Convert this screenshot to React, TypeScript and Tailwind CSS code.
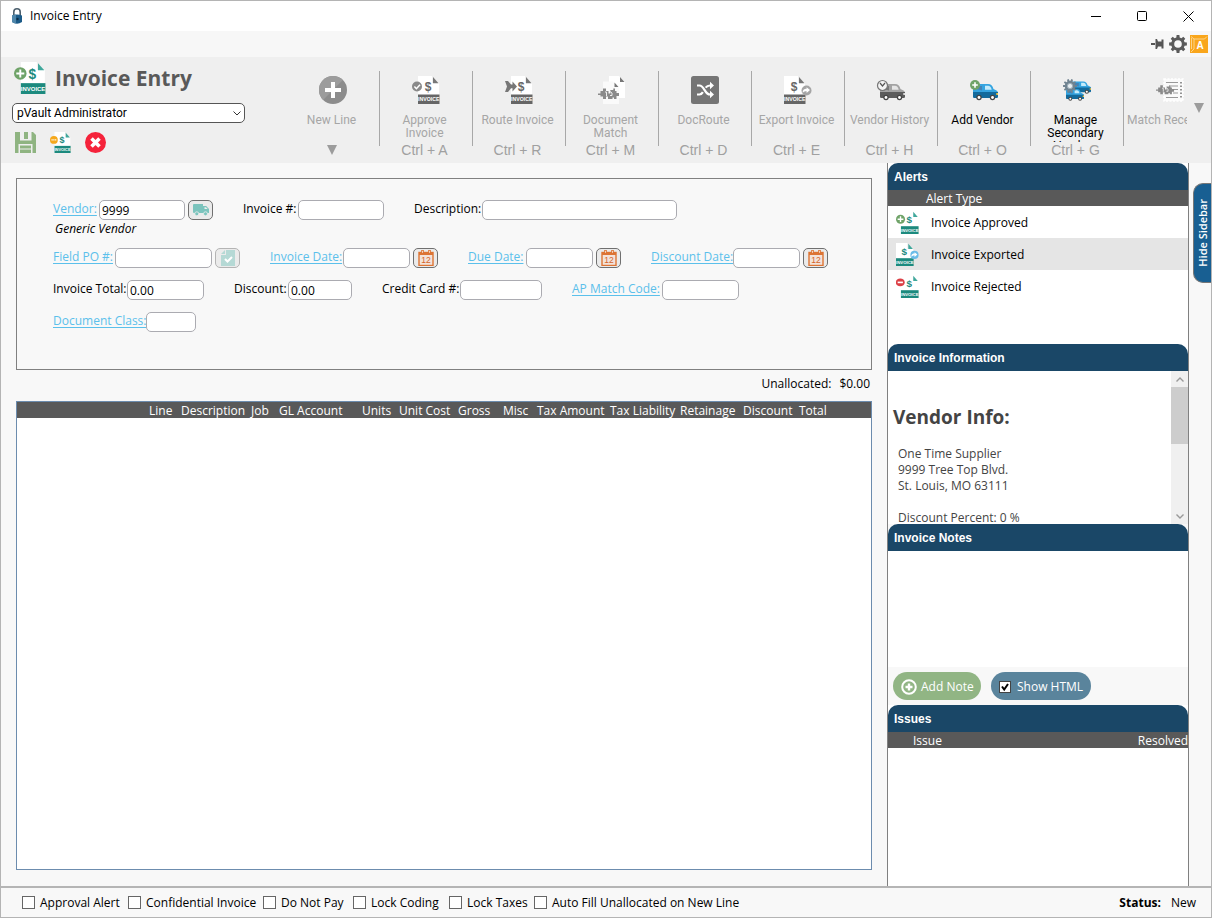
import React, { useState } from "react";

type Badge = "plus" | "check" | "minus" | "arrow" | "export" | "dots";

function BadgeMark({ badge, gray }: { badge: Badge; gray?: boolean }) {
  if (badge === "plus")
    return (
      <g>
        <circle cx="5.5" cy="10" r="5.5" fill="#6fa368" />
        <path d="M5.500 6.500v7M2 10h7" stroke="#fff" strokeWidth="1.700" />
      </g>
    );
  if (badge === "check")
    return (
      <g>
        <circle cx="5" cy="10.5" r="5" fill="#8a8a8a" />
        <path d="M2.4 10.5l2 2.2 3.6-4" stroke="#fff" strokeWidth="1.5" fill="none" />
      </g>
    );
  if (badge === "minus")
    return (
      <g>
        <ellipse cx="5.2" cy="9" rx="5.4" ry="4.8" fill="#dc3f45" />
        <path d="M2 9h6.4" stroke="#fff" strokeWidth="2" />
      </g>
    );
  if (badge === "dots")
    return (
      <g>
        <circle cx="5.2" cy="10.5" r="5.2" fill="#f5a81c" />
        <path d="M2 10.5h6.6" stroke="#fff" strokeWidth="1.5" strokeDasharray="1.6 .8" />
      </g>
    );
  if (badge === "arrow")
    return (
      <path
        d="M0 5h3l3 3.600h1.500V5.500l4.500 5-4.500 5v-3.200H6L3 16H0l2-5.500z"
        fill="#777"
      />
    );
  return (
    <g>
      <circle cx="22.5" cy="14.5" r="5" fill={gray ? "#a5a5a5" : "#6bbce8"} />
      <path
        d="M18.700 16.800c0-3.200 1.600-4.100 3.900-4.100v-1.500l3.400 2.900-3.400 2.800v-1.600c-1.700 0-2.800.4-3.900 1.500z"
        fill="#fff"
      />
    </g>
  );
}

function InvoiceIcon({ badge, gray, className }: { badge: Badge; gray?: boolean; className: string }) {
  const x = badge === "export" ? 0 : 6;
  const main = gray ? "#666" : "#1c8a7e";
  return (
    <svg viewBox="0 0 28 28" className={className} aria-hidden="true">
      <g transform={`translate(${x} 0)`}>
        <path d="M0 0h14v7h7v21H0z" fill="#fff" />
        <path d="M15 1l5.500 6.200H15z" fill={gray ? "#777" : "#3fa79b"} />
        <text x="10" y="14.500" textAnchor="middle" fontSize="12" fontWeight="700" fontFamily="Liberation Sans, sans-serif" fill={main}>
          $
        </text>
        <path d="M0 18.500h21.500V28H0z" fill={main} />
        <text x="10.700" y="25.300" textAnchor="middle" fontSize="5.200" fontWeight="700" fontFamily="Liberation Sans, sans-serif" fill="#fff">
          INVOICE
        </text>
      </g>
      <BadgeMark badge={badge} gray={gray} />
    </svg>
  );
}

function VanShape({ gray }: { gray?: boolean }) {
  const light = gray ? "#a3a3a3" : "#35a4e0";
  const dark = gray ? "#5c5c5c" : "#136a9c";
  return (
    <g>
      <path d="M0 2C0 .8.800 0 2 0h13c3 0 4.500 1.500 5.500 5l3 1.500c1 .5 1.500 1.500 1.500 3V13H0z" fill={light} />
      <path d="M0 8h25v4.500c0 .8-.4 1.500-1.200 1.500H1.500C.5 14 0 13.500 0 12.500z" fill={dark} />
      <path d="M3 2h6v4.500L3 5z" fill={gray ? "#777" : "#4583b5"} />
      <path d="M12 1.800h3c2 0 3 1.200 3.700 4H12z" fill={gray ? "#e5e5e5" : "#c4ebfb"} />
      <path d="M23.300 9H25v2h-1.700z" fill={gray ? "#ddd" : "#f4c53d"} />
      <circle cx="6" cy="13.500" r="2.700" fill="#454545" />
      <circle cx="6" cy="13.500" r="1.400" fill="#fff" />
      <circle cx="19.500" cy="13.500" r="2.700" fill="#454545" />
      <circle cx="19.500" cy="13.500" r="1.400" fill="#fff" />
    </g>
  );
}

function gearPath(cx: number, cy: number, ro: number, ri: number, teeth: number) {
  const pts: string[] = [];
  const step = (Math.PI * 2) / teeth;
  for (let i = 0; i < teeth; i++) {
    const offsets: [number, number][] = [
      [-0.32, ri],
      [-0.2, ro],
      [0.2, ro],
      [0.32, ri],
    ];
    for (const [o, r] of offsets) {
      const a = i * step + o * step;
      pts.push(`${(cx + r * Math.cos(a)).toFixed(2)} ${(cy + r * Math.sin(a)).toFixed(2)}`);
    }
  }
  return `M${pts.join("L")}z`;
}

const toolIcon = "h-7 w-7 overflow-visible";

function PlusCircle() {
  return (
    <svg viewBox="0 0 28 28" className={toolIcon} aria-hidden="true">
      <circle cx="14" cy="14" r="14" fill="#8c8c8c" />
      <path d="M4.100 23.900A14 14 0 0 1 23.900 4.100z" fill="#9c9c9c" />
      <path d="M14 6v16M6 14h16" stroke="#fff" strokeWidth="4" />
    </svg>
  );
}

function PuzzleShape() {
  return (
    <g fill="#8a8a8a">
      <path d="M0 17.500h2.500V15H5v-2.500h3V15h2.500v2.500h1.800V14h3v-1.500H17V15h1.500v2H21v3h-2.500v3H16v-1.500h-1.500V23H10v-2.500H8V23H5v-2.500H2.500V19H0z" />
      <path d="M7 16h1.500v4M12 15.500l2 1.500v2.500h-2" fill="none" stroke="#eee" strokeWidth="1" />
    </g>
  );
}

function DocumentMatchIcon() {
  return (
    <svg viewBox="0 0 28 28" className={toolIcon} aria-hidden="true">
      <path d="M11 0h10l6 6v16H11z" fill="#fff" />
      <path d="M5 5.500h10l6 6V28H5z" fill="#fafafa" />
      <path d="M22 1l4.500 5H22zM16.500 6.500l4 4.500h-4z" fill="#777" />
      <PuzzleShape />
    </svg>
  );
}

function DocRouteIcon() {
  return (
    <svg viewBox="0 0 28 28" className={toolIcon} aria-hidden="true">
      <rect width="28" height="28" rx="2.500" fill="#757575" />
      <path
        d="M6 9.500h2.500c5 0 5 9 10.500 9h1M6 18.500h2.500c1.700 0 2.600-1 3.400-2.300M14.600 11.600c1-1.300 2.200-2.100 4.400-2.100h1"
        fill="none"
        stroke="#fff"
        strokeWidth="2.200"
      />
      <path d="M19 5.800l4 3.700-4 3.700zM19 14.800l4 3.700-4 3.700z" fill="#fff" />
    </svg>
  );
}

function VendorHistoryIcon() {
  return (
    <svg viewBox="0 0 28 28" className={toolIcon} aria-hidden="true">
      <g transform="translate(3 8)">
        <VanShape gray />
      </g>
      <circle cx="5.500" cy="9.500" r="5" fill="#f4f4f4" stroke="#777" strokeWidth="1.200" />
      <path d="M3 7L5.500 10 8 7" stroke="#555" strokeWidth="1.200" fill="none" />
    </svg>
  );
}

function AddVendorIcon() {
  return (
    <svg viewBox="0 0 28 28" className={toolIcon} aria-hidden="true">
      <g transform="translate(3 8)">
        <VanShape />
      </g>
      <circle cx="5" cy="9" r="5" fill="#6fa368" />
      <path d="M5 6.200v5.600M2.200 9h5.600" stroke="#fff" strokeWidth="1.600" />
    </svg>
  );
}

function ManageVendorIcon() {
  return (
    <svg viewBox="0 0 28 28" className={toolIcon} aria-hidden="true">
      <g transform="translate(9 5.500) scale(.76)">
        <VanShape />
      </g>
      <g transform="translate(3 13) scale(.72)">
        <VanShape />
      </g>
      <path d={gearPath(7, 10, 7, 5.2, 10)} fill="#708390" />
      <circle cx="7" cy="10" r="2.600" fill="#e8eef2" stroke="#9fb0ba" strokeWidth="1" />
    </svg>
  );
}

function MatchReceiptIcon() {
  return (
    <svg viewBox="0 0 28 28" className={toolIcon} aria-hidden="true">
      <path d="M8 3h19v22H8z" fill="#fafafa" stroke="#fff" strokeWidth="1.500" strokeDasharray="2 1.500" />
      <path d="M10 6.500h12M15 10h7M17 13.500h5M17 17h5M10 21.500h12" stroke="#999" strokeWidth="1.200" />
      <path d="M25 6v16" stroke="#888" strokeWidth="1.800" strokeDasharray="1.500 2" />
      <g transform="translate(0 -1.500) scale(.86)">
        <PuzzleShape />
      </g>
    </svg>
  );
}

function TruckIcon() {
  return (
    <svg viewBox="0 0 16 12" className="h-3 w-4" aria-hidden="true">
      <path d="M1 0h9v9H1a1 1 0 0 1-1-1V1a1 1 0 0 1 1-1z" fill="#7bc4bd" />
      <path d="M10 2h3.200L16 5v4h-6z" fill="#7bc4bd" />
      <path d="M11.500 3.200h1.400L14.700 5h-3.200z" fill="#eee" />
      <circle cx="3.800" cy="9.800" r="2" fill="#7bc4bd" stroke="#eee" strokeWidth=".8" />
      <circle cx="12.500" cy="9.800" r="2" fill="#7bc4bd" stroke="#eee" strokeWidth=".8" />
    </svg>
  );
}

function FieldOrderIcon() {
  return (
    <svg viewBox="0 0 14 16" className="h-4 w-3.5" aria-hidden="true">
      <path d="M5 0h9v16H0V5h5z" fill="#b5d9d5" />
      <path d="M4 0v4H0z" fill="#b5d9d5" />
      <path d="M4 9l2.500 2.500L11 7" stroke="#fff" strokeWidth="2" fill="none" />
    </svg>
  );
}

function CalendarIcon() {
  return (
    <svg viewBox="0 0 16 16" className="h-4 w-4" aria-hidden="true">
      <rect x="1" y="2.500" width="14" height="13" fill="#f3e3da" stroke="#dd7434" strokeWidth="1.400" />
      <path d="M1 2h14v3H1z" fill="#dd7434" />
      <path d="M4.500 0v3.500M11.500 0v3.500" stroke="#dd7434" strokeWidth="2.600" />
      <path d="M4.500 .8v2M11.500 .8v2" stroke="#f6ece6" strokeWidth=".8" />
      <text x="8" y="13.200" textAnchor="middle" fontSize="8.500" fontFamily="Liberation Sans, sans-serif" fill="#d4662a">
        12
      </text>
    </svg>
  );
}

type Tool = { label: string; keys?: string; icon: React.ReactNode; active?: boolean; more?: boolean; clipped?: boolean };

const tools: Tool[] = [
  { label: "New Line", icon: <PlusCircle />, more: true },
  { label: "Approve Invoice", keys: "Ctrl + A", icon: <InvoiceIcon badge="check" gray className={toolIcon} /> },
  { label: "Route Invoice", keys: "Ctrl + R", icon: <InvoiceIcon badge="arrow" gray className={toolIcon} /> },
  { label: "Document Match", keys: "Ctrl + M", icon: <DocumentMatchIcon /> },
  { label: "DocRoute", keys: "Ctrl + D", icon: <DocRouteIcon /> },
  { label: "Export Invoice", keys: "Ctrl + E", icon: <InvoiceIcon badge="export" gray className={toolIcon} /> },
  { label: "Vendor History", keys: "Ctrl + H", icon: <VendorHistoryIcon /> },
  { label: "Add Vendor", keys: "Ctrl + O", icon: <AddVendorIcon />, active: true },
  { label: "Manage Secondary Vendors", keys: "Ctrl + G", icon: <ManageVendorIcon />, active: true },
  { label: "Match Receipts", icon: <MatchReceiptIcon />, clipped: true },
];

function ToolButton({ tool, first }: { tool: Tool; first: boolean }) {
  return (
    <div className="flex w-[93px] shrink-0 items-start">
      <span className={`h-[75px] w-px shrink-0 ${first ? "" : "bg-[#a8a8a8]"}`} />
      <button type="button" className="flex min-w-0 flex-1 flex-col items-center pt-[5px]">
        {tool.icon}
        <span className="flex w-full flex-col items-center pr-[3px]">
          <span
            className={`mt-2.5 h-7 overflow-hidden font-[Roboto,sans-serif] text-[12px] leading-[13px] ${
              tool.active ? "text-black" : "text-[#a6a6a6]"
            } ${tool.clipped ? "whitespace-nowrap" : "px-1"}`}
          >
            {tool.label}
          </span>
          {tool.keys && (
            <span className="font-['Liberation_Sans',Arial,sans-serif] text-[14px] leading-4 text-[#a0a0a0]">{tool.keys}</span>
          )}
          {tool.more && (
            <svg viewBox="0 0 10 10" className="mt-[3px] h-2.5 w-2.5" aria-hidden="true">
              <path d="M0 0h10L5 10z" fill="#9c9c9c" />
            </svg>
          )}
        </span>
      </button>
    </div>
  );
}

type FieldProps = {
  id: string;
  label: string;
  labelClass: string;
  inputClass: string;
  link?: boolean;
  value?: string;
  button?: { title: string; icon: React.ReactNode; disabled?: boolean };
};

function Field({ id, label, labelClass, inputClass, link, value, button }: FieldProps) {
  return (
    <div className="flex shrink-0 items-center">
      <label htmlFor={id} className={`-mt-0.5 shrink-0 whitespace-nowrap ${labelClass}`}>
        {link ? (
          <a href={`#${id}`} className="text-[#5bc0eb] underline underline-offset-2">
            {label}
          </a>
        ) : (
          label
        )}
      </label>
      <input
        id={id}
        type="text"
        defaultValue={value}
        className={`h-5 rounded-[5px] border border-[#ababb1] bg-white px-0.5 outline-none ${inputClass}`}
      />
      {button && (
        <button
          type="button"
          aria-label={button.title}
          disabled={button.disabled}
          className={`ml-[3px] flex h-5 w-[25px] items-center justify-center rounded-[5px] border bg-[#ebebeb] ${
            button.disabled ? "border-[#b4b4b4]" : "border-[#707070]"
          }`}
        >
          {button.icon}
        </button>
      )}
    </div>
  );
}

const columns = [
  { name: "", width: "w-[132px]" },
  { name: "Line", width: "w-[32px]" },
  { name: "Description", width: "w-[70px]" },
  { name: "Job", width: "w-[28px]" },
  { name: "GL Account", width: "w-[83px]" },
  { name: "Units", width: "w-[37px]" },
  { name: "Unit Cost", width: "w-[59px]" },
  { name: "Gross", width: "w-[45px]" },
  { name: "Misc", width: "w-[34px]" },
  { name: "Tax Amount", width: "w-[73px]" },
  { name: "Tax Liability", width: "w-[70px]" },
  { name: "Retainage", width: "w-[63px]" },
  { name: "Discount", width: "w-[56px]" },
  { name: "Total", width: "" },
];

const flags = [
  { name: "Approval Alert", width: "w-[106px]" },
  { name: "Confidential Invoice", width: "w-[135px]" },
  { name: "Do Not Pay", width: "w-[90px]" },
  { name: "Lock Coding", width: "w-[96px]" },
  { name: "Lock Taxes", width: "w-[85px]" },
  { name: "Auto Fill Unallocated on New Line", width: "" },
];

const alerts: { name: string; badge: Badge }[] = [
  { name: "Invoice Approved", badge: "plus" },
  { name: "Invoice Exported", badge: "export" },
  { name: "Invoice Rejected", badge: "minus" },
];

function PanelTitle({ children }: { children: React.ReactNode }) {
  return (
    <h2 className="h-[27px] shrink-0 rounded-t-[10px] bg-[#1a4767] px-1.5 pt-px font-['Liberation_Sans',Arial,sans-serif] text-[12px] leading-[26px] font-bold text-white">
      {children}
    </h2>
  );
}

export default function App() {
  const [showHtml, setShowHtml] = useState(true);
  const calendar = (title: string) => ({ title, icon: <CalendarIcon /> });

  return (
    <div className="flex min-h-screen flex-col border border-[#b4b4b4] bg-[#f8f8f8] font-['Open_Sans','Noto_Sans',sans-serif] text-[12px] leading-4 text-black">
      <header>
        <div className="flex h-[30px] items-center bg-white pl-2.5">
          <svg viewBox="0 0 12 16" className="h-4 w-3" aria-hidden="true">
            <path d="M2.800 8V4a3.200 3.200 0 0 1 6.400 0v4" fill="none" stroke="#4c5f6d" strokeWidth="1.600" />
            <path d="M1 7.500q5-2 10 0v6.500q-5 3.500-10 0z" fill="#1c5b88" />
            <path d="M1 7.500q2.500-1 4-1v9q-2.500-.3-4-1.500z" fill="#4f86aa" />
            <circle cx="6.500" cy="11" r="1.200" fill="#0b2b45" />
          </svg>
          <span className="ml-[7px] text-[12px]">Invoice Entry</span>
          <div className="ml-auto flex">
            <button type="button" aria-label="Minimize" className="flex h-[30px] w-[46px] items-center justify-center">
              <svg viewBox="0 0 11 11" className="h-[11px] w-[11px]"><path d="M0 5.500h10" stroke="#000" /></svg>
            </button>
            <button type="button" aria-label="Maximize" className="flex h-[30px] w-[46px] items-center justify-center">
              <svg viewBox="0 0 11 11" className="h-[11px] w-[11px]"><rect x=".5" y=".5" width="9" height="9" rx="1" fill="none" stroke="#000" /></svg>
            </button>
            <button type="button" aria-label="Close" className="flex h-[30px] w-[46px] items-center justify-center">
              <svg viewBox="0 0 11 11" className="h-[11px] w-[11px]"><path d="M.5.500l10 10M10.500.500l-10 10" stroke="#000" /></svg>
            </button>
          </div>
        </div>
        <div className="flex h-[26px] items-center justify-end gap-[3px] bg-[#f7f7f7] pr-[3px]">
          <button type="button" aria-label="Pin" className="mr-0.5">
            <svg viewBox="0 0 13 10" className="h-2.5 w-[13px]"><path d="M0 4.500h4M0 5.500h4" stroke="#555" /><path d="M4.500 0H6l1 2.500h3.500V.500H12.500v9h-2V7.500H7L6 10H4.500z" fill="#555" /></svg>
          </button>
          <button type="button" aria-label="Settings">
            <svg viewBox="0 0 18 18" className="h-[18px] w-[18px]">
              <path d={gearPath(9, 9, 9, 6.8, 8)} fill="#5a5a5a" />
              <circle cx="9" cy="9" r="3.800" fill="#f7f7f7" />
            </svg>
          </button>
          <button type="button" aria-label="Application">
            <svg viewBox="0 0 18 18" className="h-[18px] w-[18px]">
              <rect width="18" height="18" fill="#f9a61c" />
              <path d="M1 1.500l3 2.500h10.500L17 1.500M4 4v10l-3 3M1.500 3v11" fill="none" stroke="#fdd998" strokeWidth=".9" />
              <text x="10" y="14" textAnchor="middle" fontSize="10" fontWeight="700" fontFamily="Liberation Sans, sans-serif" fill="#fff">A</text>
            </svg>
          </button>
        </div>
        <div className="flex h-[106px] bg-[#efefef]">
          <div className="w-[285px] shrink-0 pl-[11px]">
            <div className="flex h-[46px] items-start gap-[9px] pt-[5px] pl-0.5">
              <InvoiceIcon badge="plus" className="h-8 w-8" />
              <h1 className="pt-0.5 text-[21px] leading-7 font-bold text-[#595959]">Invoice Entry</h1>
            </div>
            <div className="relative w-[233px]">
              <select aria-label="User" className="block h-5 w-full appearance-none rounded-[5px] border border-[#555] bg-white pl-1 font-[Roboto,sans-serif] text-[12px] outline-none">
                <option>pVault Administrator</option>
              </select>
              <svg viewBox="0 0 8 5" className="pointer-events-none absolute top-2 right-1 h-[5px] w-2" aria-hidden="true">
                <path d="M.500.500L4 4 7.500.500" fill="none" stroke="#333" />
              </svg>
            </div>
            <div className="mt-[9px] flex items-center gap-3.5 pl-[3px]">
              <button type="button" aria-label="Save">
                <svg viewBox="0 0 21 21" className="h-[21px] w-[21px]">
                  <path d="M0 0h18l3 3v18H0z" fill="#8fb481" />
                  <path d="M5 0h11.500v8.500H5z" fill="#efefef" />
                  <path d="M9 0h4v7H9z" fill="#8fb481" />
                  <path d="M3.500 12h14v9h-14z" fill="#efefef" />
                  <path d="M5 13.500h11V21H5z" fill="#8fb481" />
                  <path d="M5 17h11" stroke="#efefef" />
                </svg>
              </button>
              <button type="button" aria-label="Hold invoice">
                <InvoiceIcon badge="dots" className="h-[21px] w-[21px]" />
              </button>
              <button type="button" aria-label="Cancel">
                <svg viewBox="0 0 21 21" className="h-[21px] w-[21px]">
                  <circle cx="10.500" cy="10.500" r="10.500" fill="#f5233b" />
                  <path d="M6.500 6.500l8 8M14.500 6.500l-8 8" stroke="#fff" strokeWidth="3.600" />
                </svg>
              </button>
            </div>
          </div>
          <div className="flex min-w-0 flex-1 overflow-hidden pt-3.5">
            {tools.map((tool, i) => (
              <ToolButton key={tool.label} tool={tool} first={i === 0} />
            ))}
          </div>
          <button type="button" aria-label="More tools" className="flex w-6 shrink-0 items-start justify-center pt-[46px]">
            <svg viewBox="0 0 10 10" className="h-2.5 w-2.5"><path d="M0 0h10L5 10z" fill="#9c9c9c" /></svg>
          </button>
        </div>
      </header>

      <div className="flex flex-1">
        <main className="flex min-w-0 flex-1 flex-col px-[15px] pt-[15px] pb-4">
          <form className="h-48 shrink-0 overflow-hidden border border-[#808080] pt-[21px] pl-9">
            <div className="flex gap-[30px]">
              <Field id="vendor" label="Vendor:" labelClass="w-[46px]" inputClass="w-[86px]" link value="9999" button={{ title: "Look up vendor", icon: <TruckIcon /> }} />
              <Field id="invoice-number" label="Invoice #:" labelClass="w-[55px]" inputClass="w-[86px]" />
              <Field id="description" label="Description:" labelClass="w-[68px]" inputClass="w-[195px]" />
            </div>
            <p className="mt-px h-[27px] pl-0.5 italic">Generic Vendor</p>
            <div className="flex gap-[30px]">
              <Field id="field-po" label="Field PO #:" labelClass="w-[62px]" inputClass="w-[97px]" link button={{ title: "Look up field PO", icon: <FieldOrderIcon />, disabled: true }} />
              <Field id="invoice-date" label="Invoice Date:" labelClass="w-[73px]" inputClass="w-[67px]" link button={calendar("Pick invoice date")} />
              <Field id="due-date" label="Due Date:" labelClass="w-[58px]" inputClass="w-[67px]" link button={calendar("Pick due date")} />
              <Field id="discount-date" label="Discount Date:" labelClass="w-[82px]" inputClass="w-[67px]" link button={calendar("Pick discount date")} />
            </div>
            <div className="mt-3 flex gap-[30px]">
              <Field id="invoice-total" label="Invoice Total:" labelClass="w-[74px]" inputClass="w-[77px]" value="0.00" />
              <Field id="discount" label="Discount:" labelClass="w-[54px]" inputClass="w-[64px]" value="0.00" />
              <Field id="credit-card" label="Credit Card #:" labelClass="w-[78px]" inputClass="w-[82px]" />
              <Field id="ap-match" label="AP Match Code:" labelClass="w-[90px]" inputClass="w-[77px]" link />
            </div>
            <div className="mt-3 flex">
              <Field id="document-class" label="Document Class:" labelClass="w-[93px]" inputClass="w-[50px]" link />
            </div>
          </form>
          <div className="flex h-[31px] shrink-0 items-center justify-end gap-2 pr-0.5 pb-1">
            <span>Unallocated:</span>
            <span>$0.00</span>
          </div>
          <div className="flex-1 border border-[#6c8cae] bg-white">
            <table className="w-full table-fixed border-collapse">
              <thead className="bg-[#595959] text-left text-white">
                <tr className="h-4">
                  {columns.map((c) => (
                    <th key={c.name} scope="col" className={`p-0 pt-px leading-[15px] font-normal whitespace-nowrap ${c.width}`}>
                      {c.name}
                    </th>
                  ))}
                </tr>
              </thead>
              <tbody />
            </table>
          </div>
        </main>

        <aside className="flex w-[302px] shrink-0 flex-col border-x border-[#808080] bg-[#f8f8f8]">
          <section className="h-[181px] bg-white">
            <PanelTitle>Alerts</PanelTitle>
            <table className="w-full table-fixed border-collapse">
              <thead className="bg-[#595959] text-left text-white">
                <tr className="h-4">
                  <th className="w-[38px] p-0" />
                  <th scope="col" className="p-0 pt-px leading-[15px] font-normal">Alert Type</th>
                </tr>
              </thead>
              <tbody>
                {alerts.map((a) => (
                  <tr key={a.name} className="h-8 even:bg-[#e5e5e5]">
                    <td className="p-0 pl-2">
                      <InvoiceIcon badge={a.badge} className="h-[23px] w-[23px]" />
                    </td>
                    <td className="p-0 pt-0.5 pl-[5px]">{a.name}</td>
                  </tr>
                ))}
              </tbody>
            </table>
          </section>
          <section className="flex h-[180px] flex-col bg-white">
            <PanelTitle>Invoice Information</PanelTitle>
            <div className="flex min-h-0 flex-1">
              <div className="flex-1 overflow-hidden pl-[5px] text-[#444]">
                <h3 className="mt-8 text-[19px] leading-7 font-bold">Vendor Info:</h3>
                <div className="mt-[15px] pl-[5px]">
                  <p>One Time Supplier</p>
                  <p>9999 Tree Top Blvd.</p>
                  <p>St. Louis, MO 63111</p>
                  <p className="mt-4">Discount Percent: 0 %</p>
                </div>
              </div>
              <div className="flex w-[17px] flex-col bg-[#f0f0f0]">
                <button type="button" aria-label="Scroll up" className="flex h-4 items-center justify-center">
                  <svg viewBox="0 0 8 5" className="h-[5px] w-2"><path d="M.500 4.500L4 1l3.500 3.500" fill="none" stroke="#999" strokeWidth="1.400" /></svg>
                </button>
                <div className="h-[57px] bg-[#cdcdcd]" />
                <button type="button" aria-label="Scroll down" className="mt-auto flex h-4 items-center justify-center">
                  <svg viewBox="0 0 8 5" className="h-[5px] w-2"><path d="M.500.500L4 4 7.500.500" fill="none" stroke="#999" strokeWidth="1.400" /></svg>
                </button>
              </div>
            </div>
          </section>
          <section className="flex h-[181px] flex-col">
            <PanelTitle>Invoice Notes</PanelTitle>
            <div className="flex-1 bg-white" />
            <div className="flex h-[38px] gap-2.5 px-[5px] pt-[5px]">
              <button type="button" className="flex h-7 w-[88px] items-center gap-1 rounded-full bg-[#91b584] pt-px pl-2 whitespace-nowrap text-white">
                <svg viewBox="0 0 16 16" className="h-4 w-4 shrink-0" aria-hidden="true">
                  <circle cx="8" cy="8" r="6.800" fill="none" stroke="#fff" strokeWidth="2" />
                  <path d="M8 4.500v7M4.500 8h7" stroke="#fff" strokeWidth="2.400" />
                </svg>
                Add Note
              </button>
              <label className="flex h-7 w-[100px] items-center gap-1.5 rounded-full bg-[#5a849c] pt-px pl-2 whitespace-nowrap text-white">
                <span className="relative h-3 w-3 shrink-0">
                  <input type="checkbox" checked={showHtml} onChange={(e) => setShowHtml(e.target.checked)} className="block h-3 w-3 appearance-none border border-[#444] bg-white" />
                  {showHtml && (
                    <svg viewBox="0 0 12 12" className="pointer-events-none absolute inset-0 h-3 w-3" aria-hidden="true">
                      <path d="M3 5.500L5.200 8.500 9 3" fill="none" stroke="#000" strokeWidth="2" />
                    </svg>
                  )}
                </span>
                Show HTML
              </label>
            </div>
          </section>
          <section className="flex flex-1 flex-col bg-white">
            <PanelTitle>Issues</PanelTitle>
            <table className="w-full table-fixed border-collapse">
              <thead className="bg-[#595959] text-white">
                <tr className="h-4">
                  <th scope="col" className="p-0 pt-px pl-[25px] text-left leading-[15px] font-normal">Issue</th>
                  <th scope="col" className="p-0 pt-px text-right leading-[15px] font-normal">Resolved</th>
                </tr>
              </thead>
              <tbody />
            </table>
          </section>
        </aside>
        <div className="flex w-[22px] shrink-0 items-start justify-end pt-5">
          <button type="button" className="flex h-[100px] w-[18px] items-center justify-center rounded-l-[10px] border border-r-0 border-[#777] bg-[#185f92] text-white">
            <span className="rotate-180 text-[11px] font-semibold whitespace-nowrap [writing-mode:vertical-rl]">Hide Sidebar</span>
          </button>
        </div>
      </div>

      <footer className="flex h-[31px] shrink-0 items-center border-t-2 border-[#b5b5b5] bg-[#f8f8f8] pr-[15px] pl-[21px]">
        {flags.map((f) => (
          <label key={f.name} className={`flex shrink-0 items-center gap-[5px] whitespace-nowrap ${f.width}`}>
            <input type="checkbox" className="h-[13px] w-[13px] shrink-0 appearance-none border border-[#666] bg-white" />
            {f.name}
          </label>
        ))}
        <span className="ml-auto font-bold">Status:</span>
        <span className="ml-2.5">New</span>
      </footer>
    </div>
  );
}
